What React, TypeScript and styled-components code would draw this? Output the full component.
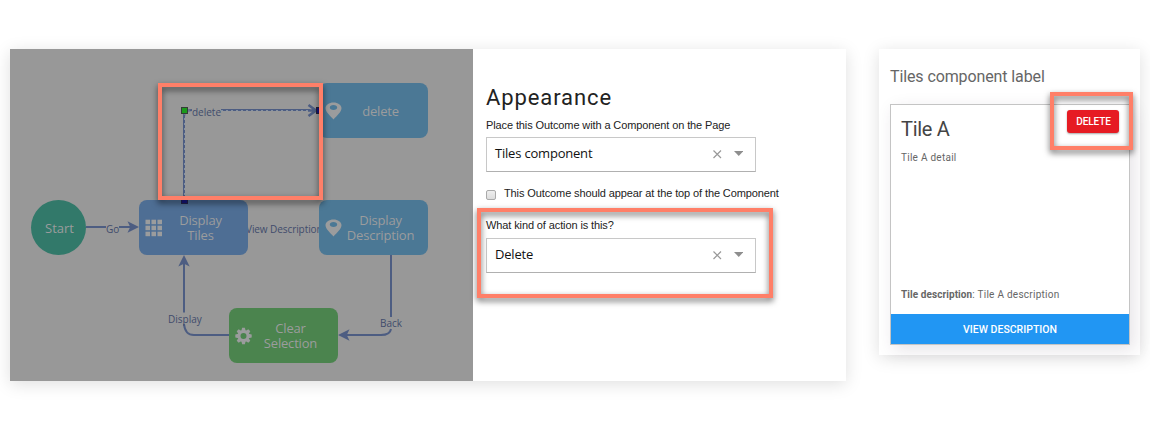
import React from "react";
import styled, { createGlobalStyle, css } from "styled-components";

const GlobalStyle = createGlobalStyle`
  * { box-sizing: border-box; }
  body { margin: 0; background: #fff; font-family: "Liberation Sans", Arial, sans-serif; }
`;

const openSans = css`font-family: "Open Sans", "Noto Sans", sans-serif;`;
const roboto = css`font-family: Roboto, sans-serif;`;

const Page = styled.main`
  display: flex;
  align-items: flex-start;
  gap: 33px;
  width: 1150px;
  height: 448px;
  padding: 49px 10px 0;
  overflow: hidden;
`;

const Editor = styled.section`
  display: flex;
  width: 836px;
  height: 332px;
  background: #fff;
  box-shadow: 0 3px 16px rgba(0, 0, 0, 0.13);
`;

const Canvas = styled.div`
  position: relative;
  flex: none;
  width: 463px;
  height: 332px;
  background: #989898;
  ${openSans}
`;

const Connectors = styled.svg`
  position: absolute;
  inset: 0;
`;

const Node = styled.div<{ $x: number; $y: number; $color: string }>`
  position: absolute;
  left: ${(p) => p.$x}px;
  top: ${(p) => p.$y}px;
  display: flex;
  align-items: center;
  width: 109px;
  height: 55px;
  padding: 0 7px 0 6px;
  border-radius: 8px;
  background: ${(p) => p.$color};
  color: #9b9c9d;
  font-size: 13px;
  line-height: 15px;
`;

const StartNode = styled(Node)`
  justify-content: center;
  width: 55px;
  padding: 2px 0 0 2px;
  border-radius: 50%;
`;

const NodeLabel = styled.span<{ $shift?: number }>`
  display: flex;
  flex: 1;
  flex-direction: column;
  align-items: center;
  margin: ${(p) => p.$shift ?? 0}px -2px 0 -4px;
  letter-spacing: -0.18px;
`;

const NodeIcon = styled.svg`
  flex: none;
  width: 17px;
  height: 18px;
`;

const EdgeLabel = styled.span<{ $x: number; $y: number; $spacing?: number }>`
  position: absolute;
  left: ${(p) => p.$x}px;
  top: ${(p) => p.$y}px;
  color: #414c6c;
  font-size: 10px;
  line-height: 12px;
  letter-spacing: ${(p) => p.$spacing ?? 0}px;
  white-space: nowrap;
`;

const Highlight = styled.div<{ $x: number; $y: number; $w: number; $h: number }>`
  position: absolute;
  left: ${(p) => p.$x}px;
  top: ${(p) => p.$y}px;
  width: ${(p) => p.$w}px;
  height: ${(p) => p.$h}px;
  border: 4px solid #ff7f68;
  filter: drop-shadow(0 3px 3px rgba(0, 0, 0, 0.6));
  pointer-events: none;
`;

const Form = styled.div`
  position: relative;
  flex: 1;
  padding: 35px 0 0 13px;
  color: #222;
`;

const FormTitle = styled.h1`
  margin: 0;
  height: 34px;
  ${roboto}
  font-size: 22px;
  font-weight: 400;
  line-height: 28px;
  letter-spacing: 0.9px;
`;

const FieldLabel = styled.label`
  display: block;
  height: 19px;
  font-size: 11px;
  line-height: 14px;
  letter-spacing: -0.11px;
`;

const SelectBox = styled.div`
  display: flex;
  align-items: center;
  width: 270px;
  height: 35px;
  padding: 0 12px 2px 8px;
  border: 1px solid #c8c8c8;
  border-bottom-color: #b0b0b0;
  color: #111;
  ${openSans}
  font-size: 13px;
  letter-spacing: -0.2px;
`;

const SelectValue = styled.span`
  flex: 1;
  padding-bottom: 1px;
`;

const CheckRow = styled.div`
  display: flex;
  gap: 8px;
  height: 32px;
  margin-top: 14px;
  font-size: 11px;
  line-height: 14px;
  letter-spacing: -0.11px;
`;

const KindField = styled.div`
  display: flex;
  flex-direction: column;
  gap: 1px;
`;

const Checkbox = styled.span`
  width: 10px;
  height: 10px;
  margin-top: 4px;
  border: 1px solid #aaa;
  border-radius: 2px;
  background: linear-gradient(#eee, #ddd);
`;

const Preview = styled.section`
  width: 261px;
  height: 306px;
  padding: 18px 10px 0 11px;
  background: #fff;
  box-shadow: 0 3px 16px rgba(0, 0, 0, 0.13);
  ${roboto}
`;

const PreviewLabel = styled.h2`
  margin: 0;
  height: 37px;
  color: #666;
  font-size: 16px;
  font-weight: 400;
  line-height: 20px;
  letter-spacing: -0.11px;
`;

const Tile = styled.article`
  position: relative;
  display: flex;
  flex-direction: column;
  width: 240px;
  height: 241px;
  border: 1px solid #c4c4c4;
  background: #fff;
  box-shadow: 4px 5px 16px rgba(60, 40, 70, 0.13);
`;

const TileHead = styled.header`
  display: flex;
  justify-content: space-between;
  padding: 5px 10px 0;
`;

const TileTitle = styled.h3`
  margin: 7px 0 0;
  color: #444;
  font-size: 20px;
  font-weight: 400;
  line-height: 24px;
  letter-spacing: -0.3px;
`;

const DeleteButton = styled.button`
  width: 52px;
  height: 23px;
  padding: 0 0 0 1px;
  border: 0;
  border-radius: 3px;
  background: #e61b23;
  box-shadow: 0 1px 2px rgba(0, 0, 0, 0.35);
  color: #fff;
  ${roboto}
  font-size: 10px;
  font-weight: 500;
  line-height: 23px;
  letter-spacing: -0.1px;
`;

const TileText = styled.p<{ $top?: string }>`
  margin: ${(p) => p.$top ?? "0"} 10px 0;
  color: #666;
  font-size: 10px;
  line-height: 12px;
  letter-spacing: 0.26px;

  b { letter-spacing: 0.08px; }
`;

const ViewButton = styled.button`
  height: 30px;
  margin: 13px 0 0;
  padding: 0;
  border: 0;
  background: #2196f3;
  color: #fff;
  ${roboto}
  font-size: 10.5px;
  font-weight: 500;
`;

const PinIcon = () => (
  <NodeIcon viewBox="0 0 17 18">
    <path
      fillRule="evenodd"
      fill="#9b9c9d"
      d="M8.5 .5C4 .5 .5 3 .5 6.300c0 3.500 4.700 7.600 8 11.200 3.300-3.600 8-7.700 8-11.200C16.500 3 13 .500 8.500 .500ZM8.500 3.100c2.200 0 3.700 1.100 3.700 2.500S10.700 8.100 8.500 8.100 4.800 7 4.800 5.600 6.300 3.100 8.500 3.100Z"
    />
  </NodeIcon>
);

const GridIcon = () => (
  <NodeIcon viewBox="0 0 17 18">
    {[1, 7, 13].map((y) =>
      [0.5, 6.5, 12.5].map((x) => (
        <rect key={`${x}-${y}`} x={x} y={y - 0.3} width="4.500" height="4.500" fill="#9b9c9d" />
      ))
    )}
  </NodeIcon>
);

const GearIcon = () => (
  <NodeIcon viewBox="0 0 17 18">
    <g transform="translate(8.500 9)" fill="#9b9c9d">
      {[0, 45, 90, 135, 180, 225, 270, 315].map((a) => (
        <path key={a} transform={`rotate(${a})`} d="M-2.200 -5 -1.400 -8.200H1.400L2.200 -5Z" />
      ))}
      <circle r="4.500" fill="none" stroke="#9b9c9d" strokeWidth="3" />
    </g>
  </NodeIcon>
);

const Select = ({ value }: { value: string }) => (
  <SelectBox>
    <SelectValue>{value}</SelectValue>
    <svg width="30" height="10" viewBox="0 0 30 10">
      <path d="M.5 1.500 8 9M8 1.500.500 9" stroke="#999" strokeWidth="1.200" fill="none" />
      <path d="M21 2h9.500L25.750 7Z" fill="#8e8e8e" />
    </svg>
  </SelectBox>
);

const line = "#4d5d82";

const Arrow = ({ x, y, turn }: { x: number; y: number; turn: number }) => (
  <path d="M0 0-11.500 -5.700-8.800 0-11.500 5.700Z" transform={`translate(${x} ${y}) rotate(${turn})`} fill={line} />
);

export default function App() {
  return (
    <>
      <GlobalStyle />
      <Page>
        <Editor>
          <Canvas>
            <Connectors width="463" height="332" viewBox="0 0 463 332">
              <g fill="none" stroke={line} strokeWidth="2">
                <path d="M76 178H96M109 178H121" />
                <path d="M174 213V263.500M174 275Q175 286 184 286H219" />
                <path d="M381 206V268M381 280Q380 286 371 286H336" />
                <path d="M174 151V68Q174 61 182 61M211 61H300" />
              </g>
              <path d="M174.500 151V68Q174.500 61.500 182 61.500M211 61.500H300" fill="none" stroke="#98a3ac" strokeOpacity=".75" strokeWidth="1" strokeDasharray="2 3" />
              <Arrow x={129} y={178} turn={0} />
              <Arrow x={174} y={206} turn={-90} />
              <Arrow x={328} y={286} turn={180} />
              <path d="M298.500 56 306 61.500 298.500 67M298 61.500H309" fill="none" stroke={line} strokeWidth="2.500" />
            </Connectors>
            <EdgeLabel $x={182} $y={57}>delete</EdgeLabel>
            <EdgeLabel $x={96} $y={174}>Go</EdgeLabel>
            <EdgeLabel $x={236} $y={174} $spacing={-0.08}>View Description</EdgeLabel>
            <EdgeLabel $x={158} $y={264}>Display</EdgeLabel>
            <EdgeLabel $x={370} $y={268}>Back</EdgeLabel>
            <StartNode $x={21} $y={151} $color="#32796a">Start</StartNode>
            <Node $x={129} $y={151} $color="#4e6e94">
              <GridIcon />
              <NodeLabel><span>Display</span><span>Tiles</span></NodeLabel>
            </Node>
            <Node $x={309} $y={34} $color="#4b7895">
              <PinIcon />
              <NodeLabel $shift={2}>delete</NodeLabel>
            </Node>
            <Node $x={309} $y={151} $color="#4b7895">
              <PinIcon />
              <NodeLabel><span>Display</span><span>Description</span></NodeLabel>
            </Node>
            <Node $x={219} $y={259} $color="#4b844e">
              <GearIcon />
              <NodeLabel><span>Clear</span><span>Selection</span></NodeLabel>
            </Node>
            <Connectors width="463" height="332" viewBox="0 0 463 332">
              <rect x="171.500" y="58.500" width="6" height="6" fill="#1b9a1b" stroke="#333d35" />
              <rect x="306.500" y="58.500" width="6" height="6" fill="#15157c" stroke="#222238" />
              <rect x="171.500" y="148.500" width="6" height="6" fill="#15157c" stroke="#222248" />
            </Connectors>
            <Highlight $x={148} $y={34} $w={165} $h={117} />
          </Canvas>
          <Form>
            <FormTitle>Appearance</FormTitle>
            <FieldLabel>Place this Outcome with a Component on the Page</FieldLabel>
            <Select value="Tiles component" />
            <CheckRow>
              <Checkbox />
              <span>This Outcome should appear at the top of the Component</span>
            </CheckRow>
            <KindField>
              <FieldLabel>What kind of action is this?</FieldLabel>
              <Select value="Delete" />
            </KindField>
            <Highlight $x={4} $y={159} $w={296} $h={90} />
          </Form>
        </Editor>
        <Preview>
          <PreviewLabel>Tiles component label</PreviewLabel>
          <Tile>
            <TileHead>
              <TileTitle>Tile A</TileTitle>
              <DeleteButton>DELETE</DeleteButton>
            </TileHead>
            <TileText $top="11px">Tile A detail</TileText>
            <TileText $top="auto"><b>Tile description</b>: Tile A description</TileText>
            <ViewButton>VIEW DESCRIPTION</ViewButton>
            <Highlight $x={159} $y={-13} $w={83} $h={58} />
          </Tile>
        </Preview>
      </Page>
    </>
  );
}
